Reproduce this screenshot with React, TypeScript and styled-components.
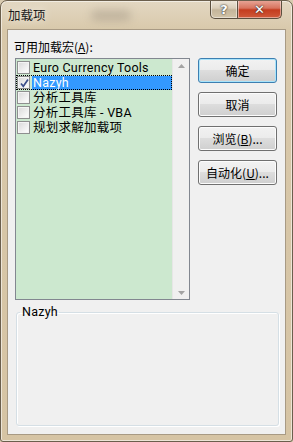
import React from "react";
import styled, { createGlobalStyle } from "styled-components";

const Global = createGlobalStyle`
  html, body { margin: 0; padding: 0; background: #d9cbb0; }
  body { width: 293px; height: 442px; overflow: hidden; }
  * { box-sizing: border-box; }
`;

const FONT = `"Noto Sans CJK SC", "Open Sans", sans-serif`;
const LIST_FONT = `Roboto, "Noto Sans CJK SC", sans-serif`;

const Window = styled.div`
  width: 293px;
  height: 442px;
  display: flex;
  flex-direction: column;
  border: 1px solid #6b5f4d;
  border-radius: 7px 7px 3px 3px;
  background: linear-gradient(180deg, #e3d7c2 0%, #d8c8aa 30px, #d6c4a4 100%);
  box-shadow: inset 0 0 0 1px rgba(255, 255, 255, 0.55);
  font-family: ${FONT};
  font-size: 12px;
  color: #000;
  overflow: hidden;
  position: relative;
`;

const TitleBar = styled.div`
  height: 28px;
  flex: none;
  display: flex;
  align-items: flex-start;
  padding-left: 7px;
  position: relative;
`;

const TitleText = styled.div`
  margin-top: 6px;
  font-size: 12.5px;
  line-height: 16px;
  color: #1a1a1a;
  text-shadow: 0 0 8px rgba(255, 255, 255, 0.9);
`;

const Blur = styled.div`
  position: absolute;
  left: 90px;
  top: 9px;
  width: 40px;
  height: 11px;
  border-radius: 6px;
  background: rgba(140, 130, 115, 0.35);
  filter: blur(4px);
`;

const Caption = styled.div`
  position: absolute;
  right: 10px;
  top: -1px;
  display: flex;
`;

const CapButton = styled.div<{ $close?: boolean }>`
  height: 19px;
  width: ${(p) => (p.$close ? "44px" : "28px")};
  border: 1px solid #5b4f3f;
  border-top: none;
  border-left: ${(p) => (p.$close ? "none" : "1px solid #5b4f3f")};
  border-radius: ${(p) => (p.$close ? "0 0 5px 0" : "0 0 0 5px")};
  background: ${(p) =>
    p.$close
      ? "linear-gradient(180deg, #e9a99b 0%, #d8745f 45%, #c43c1f 55%, #d05a3a 100%)"
      : "linear-gradient(180deg, #efe8dc 0%, #d9cdb8 45%, #c4b59a 55%, #d3c5aa 100%)"};
  box-shadow: inset 0 0 0 1px rgba(255, 255, 255, 0.45);
  display: flex;
  align-items: center;
  justify-content: center;
  color: #fff;
  font-family: "DejaVu Sans", sans-serif;
  font-weight: bold;
  font-size: 13px;
  text-shadow: 0 0 2px #333, 0 0 1px #333;
`;

const Client = styled.div`
  flex: 1;
  margin: 0 6px 6px 6px;
  border: 1px solid #a89a84;
  background: #f0f0f0;
  display: flex;
  flex-direction: column;
  padding: 0 8px 0 7px;
`;

const Top = styled.div`
  display: flex;
  justify-content: space-between;
`;

const LeftCol = styled.div`
  display: flex;
  flex-direction: column;
`;

const Label = styled.div`
  margin-top: 10px;
  margin-left: -1px;
  line-height: 14px;
  height: 18px;
  u { text-decoration: underline; }
`;

const ListBox = styled.div`
  width: 175px;
  height: 242px;
  border: 1px solid #828790;
  display: flex;
  background: #cce8cf;
`;

const Items = styled.div`
  flex: 1;
  padding-top: 1px;
  display: flex;
  flex-direction: column;
`;

const Item = styled.div<{ $focus?: boolean }>`
  height: 15px;
  display: flex;
  align-items: center;
  padding-left: 1px;
  outline: ${(p) => (p.$focus ? "1px dotted #000" : "none")};
  outline-offset: -1px;
`;

const Check = styled.div`
  width: 13px;
  height: 13px;
  border: 1px solid #8e8f8f;
  background: linear-gradient(135deg, #d8d8d8 0%, #f4f4f4 70%, #fff 100%);
  box-shadow: inset 0 0 0 1px #f4f4f4;
  position: relative;
  flex: none;
  svg { position: absolute; left: 1px; top: 1px; }
`;

const ItemText = styled.div<{ $sel?: boolean }>`
  margin-left: 2px;
  flex: 1;
  height: 14px;
  line-height: 14px;
  padding-left: 1px;
  white-space: nowrap;
  font-family: ${LIST_FONT};
  font-size: 12.5px;
  letter-spacing: 0.25px;
  background: ${(p) => (p.$sel ? "#3399ff" : "transparent")};
  color: ${(p) => (p.$sel ? "#fff" : "#000")};
`;

const ScrollBar = styled.div`
  width: 17px;
  background: #f0f0f0;
  border-left: 1px solid #e6e6e6;
  display: flex;
  flex-direction: column;
  justify-content: space-between;
  align-items: center;
  padding: 5px 0 4px 0;
`;

const Arrow = styled.svg`
  display: block;
`;

const Buttons = styled.div`
  display: flex;
  flex-direction: column;
  gap: 9px;
  padding-top: 28px;
`;

const Button = styled.div<{ $def?: boolean }>`
  width: 79px;
  height: 25px;
  border: 1px solid ${(p) => (p.$def ? "#3c7fb1" : "#707070")};
  border-radius: 3px;
  background: linear-gradient(180deg, #f2f2f2 0%, #ebebeb 49%, #dddddd 50%, #cfcfcf 100%);
  box-shadow: inset 0 0 0 1px ${(p) => (p.$def ? "#a8e4fb" : "#fcfcfc")};
  display: flex;
  align-items: center;
  justify-content: center;
  font-size: 12px;
  line-height: 14px;
  color: #000;
  u { text-decoration: underline; }
`;

const Group = styled.fieldset`
  margin: 5px 0 0 1px;
  padding: 0;
  width: 263px;
  height: 121px;
  border: 1px solid #d5dfe5;
  border-radius: 3px;
  box-shadow: 1px 1px 0 #fff, inset 1px 1px 0 #fff;
  legend {
    padding: 0 1px 0 2px;
    margin-left: 3px;
    font-family: ${LIST_FONT};
    font-size: 12.5px;
    letter-spacing: 0.25px;
    line-height: 14px;
  }
`;

const CheckMark = () => (
  <svg width="11" height="11" viewBox="0 0 11 11">
    <path d="M2 5.5 L4.3 8.3 L9 1.6" fill="none" stroke="#3c4f8a" strokeWidth="1.7" />
  </svg>
);

const items = [
  { name: "Euro Currency Tools", checked: false },
  { name: "Nazyh", checked: true, sel: true },
  { name: "分析工具库", checked: false },
  { name: "分析工具库 - VBA", checked: false },
  { name: "规划求解加载项", checked: false },
];

export default function App() {
  return (
    <>
      <Global />
      <Window>
        <TitleBar>
          <TitleText>加载项</TitleText>
          <Blur />
          <Caption>
            <CapButton>?</CapButton>
            <CapButton $close>✕</CapButton>
          </Caption>
        </TitleBar>
        <Client>
          <Top>
            <LeftCol>
              <Label>
                可用加载宏(<u>A</u>):
              </Label>
              <ListBox>
                <Items>
                  {items.map((it) => (
                    <Item key={it.name} $focus={it.sel}>
                      <Check>{it.checked && <CheckMark />}</Check>
                      <ItemText $sel={it.sel}>{it.name}</ItemText>
                    </Item>
                  ))}
                </Items>
                <ScrollBar>
                  <Arrow width="7" height="4" viewBox="0 0 7 4">
                    <path d="M0 4 L3.5 0 L7 4 Z" fill="#a3a3a3" />
                  </Arrow>
                  <Arrow width="7" height="4" viewBox="0 0 7 4">
                    <path d="M0 0 L3.5 4 L7 0 Z" fill="#a3a3a3" />
                  </Arrow>
                </ScrollBar>
              </ListBox>
            </LeftCol>
            <Buttons>
              <Button $def>确定</Button>
              <Button>取消</Button>
              <Button>
                浏览(<u>B</u>)...
              </Button>
              <Button>
                自动化(<u>U</u>)...
              </Button>
            </Buttons>
          </Top>
          <Group>
            <legend>Nazyh</legend>
          </Group>
        </Client>
      </Window>
    </>
  );
}
